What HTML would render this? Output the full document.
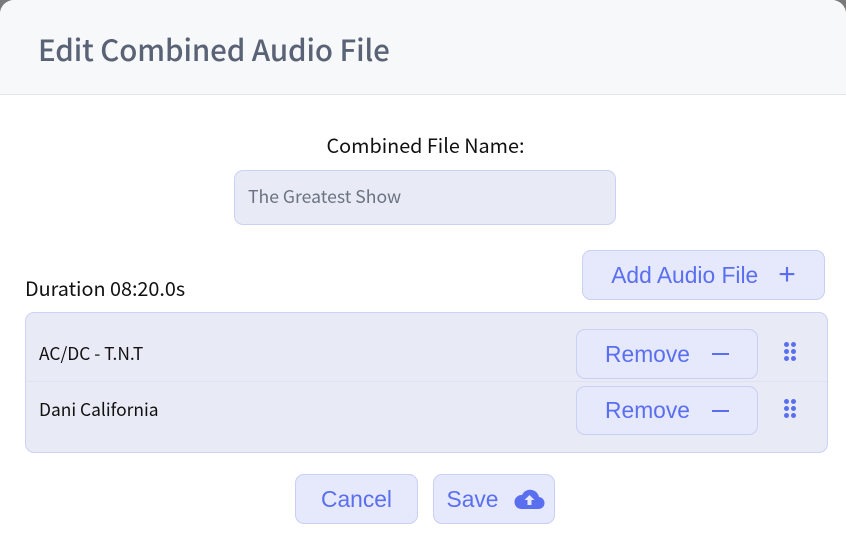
<!DOCTYPE html>
<html style="height:535px;overflow:hidden"><head><style>
*{box-sizing:border-box;margin:0;padding:0}
body{width:846px;height:535px;background:#7a7a7a;position:relative;overflow:hidden;font-family:"Liberation Sans",sans-serif}
.m{position:absolute;left:0;top:0;width:846px;height:535px;background:#fff;border-radius:14px 14px 0 0;overflow:hidden}
.hd{position:absolute;left:0;top:0;width:846px;height:95px;background:#f7f8fa;border-bottom:1px solid #e5e7eb}
.hd h1{position:absolute;left:38px;top:28px;font:500 29.5px "Noto Sans CJK JP","Liberation Sans",sans-serif;color:#5a6275;letter-spacing:-0.1px}
.lbl{position:absolute;font:19.8px "Noto Sans CJK JP","Liberation Sans",sans-serif;color:#111}
.inp{position:absolute;left:234px;top:170px;width:382px;height:55px;background:#e8eaf6;border:1px solid #cbd1f4;border-radius:9px;font:17.6px "Noto Sans CJK JP",sans-serif;color:#6b7280;padding:13px 0 0 13px}
.btn{position:absolute;background:#e6e8fb;border:1px solid #c9cff5;border-radius:9px;color:#5a6ff0;font:22.8px "Liberation Sans",sans-serif;display:flex;align-items:center;justify-content:center}
.list{position:absolute;left:25px;top:312px;width:803px;height:141px;background:#e8eaf5;border:1px solid #cdd3f5;border-radius:9px}
.row{position:absolute;left:39px;font:17.4px "Noto Sans CJK JP",sans-serif;color:#111}
.dots{position:absolute;width:12px;height:20px}
.dots i{position:absolute;width:5px;height:5px;border-radius:50%;background:#5a6ff0}
</style></head><body>
<div class="m">
<div class="hd"><h1>Edit Combined Audio File</h1></div>
<div class="lbl" style="left:0;width:851px;text-align:center;top:130px">Combined File Name:</div>
<div class="inp">The Greatest Show</div>
<div class="lbl" style="left:25px;top:273px">Duration 08:20.0s</div>
<div class="btn" style="left:582px;top:250px;width:243px;height:50px">Add Audio File<span style="margin-left:20px;font-size:30px;line-height:1">+</span></div>
<div class="list"><div style="position:absolute;left:0;right:0;top:68px;border-top:1px solid #dfe2f3"></div></div>
<div class="row" style="top:341px">AC/DC - T.N.T</div>
<div class="row" style="top:397px">Dani California</div>
<div class="btn" style="left:576px;top:329px;width:182px;height:50px">Remove<span style="margin-left:22px;width:17px;height:2px;background:#5a6ff0;display:inline-block"></span></div>
<div class="btn" style="left:576px;top:386px;width:182px;height:49px">Remove<span style="margin-left:22px;width:17px;height:2px;background:#5a6ff0;display:inline-block"></span></div>
<div class="dots" style="left:784px;top:342px"><i style="left:0;top:0"></i><i style="left:7px;top:0"></i><i style="left:0;top:7px"></i><i style="left:7px;top:7px"></i><i style="left:0;top:14px"></i><i style="left:7px;top:14px"></i></div>
<div class="dots" style="left:784px;top:399px"><i style="left:0;top:0"></i><i style="left:7px;top:0"></i><i style="left:0;top:7px"></i><i style="left:7px;top:7px"></i><i style="left:0;top:14px"></i><i style="left:7px;top:14px"></i></div>
<div class="btn" style="left:295px;top:474px;width:123px;height:50px">Cancel</div>
<div class="btn" style="left:433px;top:474px;width:122px;height:50px"><span style="margin-left:4px">Save</span><svg style="margin-left:16px" width="31" height="22" viewBox="0 0 31 22"><path d="M7 21h17a6 6 0 0 0 1-12A9 9 0 0 0 8 7a7 7 0 0 0-1 14z" fill="#5a6ff0"/><path d="M15.5 7l-5 5h3v5h4v-5h3z" fill="#e6e8fb"/></svg></div>
</div>
</body></html>
